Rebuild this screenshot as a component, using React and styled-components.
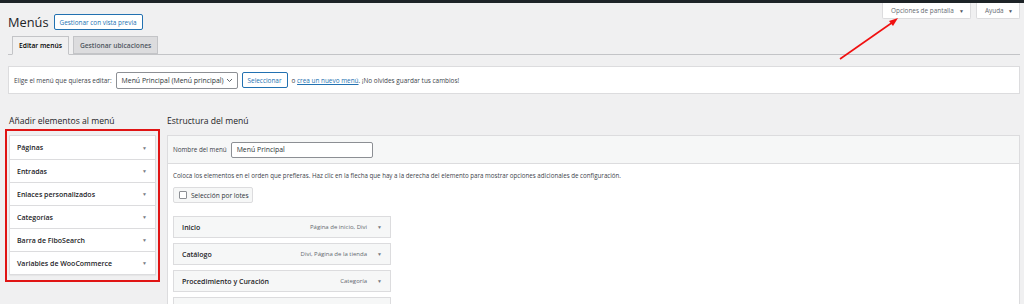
import React from "react";
import styled, { createGlobalStyle } from "styled-components";

const GlobalStyle = createGlobalStyle`
  html, body { margin: 0; padding: 0; }
  body {
    background: #f0f0f1;
    font-family: "Open Sans", "Noto Sans", sans-serif;
    color: #3c434a;
    width: 1024px;
    height: 304px;
    overflow: hidden;
    white-space: nowrap;
  }
`;

const Page = styled.div`
  position: relative;
  width: 1024px;
  height: 304px;
  overflow: hidden;
`;

const AdminBar = styled.div`
  height: 3px;
  background: #1d2327;
`;

const MetaRow = styled.div`
  display: flex;
  justify-content: flex-end;
  gap: 5px;
  padding-right: 4px;
  height: 0;
  overflow: visible;
`;

const MetaTab = styled.div`
  height: 16px;
  box-sizing: border-box;
  padding: 0 6px 0 8px;
  display: flex;
  align-items: center;
  justify-content: space-between;
  background: #fff;
  border: 1px solid #dcdcde;
  border-top: none;
  border-radius: 0 0 2px 2px;
  font-size: 6.4px;
  color: #646970;
  width: ${(p) => p.$w}px;
  flex-shrink: 0;
`;

const Caret = styled.span`
  font-size: 5px;
  color: ${(p) => p.$color || "#50575e"};
`;

const Wrap = styled.div`
  padding: 0 4px 0 8px;
`;

const TitleRow = styled.div`
  display: flex;
  align-items: center;
  gap: 5px;
  padding-top: 10px;
  height: 18px;
`;

const H1 = styled.h1`
  margin: 0;
  font-size: 12.8px;
  font-weight: 400;
  color: #1d2327;
`;

const OutlineButton = styled.button`
  height: 16px;
  box-sizing: border-box;
  padding: 0 5px;
  background: ${(p) => (p.$grey ? "#f6f7f7" : "#fff")};
  border: 1px solid ${(p) => (p.$grey ? "#dcdcde" : "#2271b1")};
  border-radius: 2px;
  color: ${(p) => (p.$grey ? "#2c3338" : "#2271b1")};
  font-family: inherit;
  font-size: 6.4px;
  display: inline-flex;
  align-items: center;
  gap: 4px;
  white-space: nowrap;
`;

const Tabs = styled.div`
  display: flex;
  gap: 4px;
  margin-top: 5px;
  padding-left: 4px;
  border-bottom: 1px solid #c3c4c7;
  height: 18px;
`;

const Tab = styled.div`
  box-sizing: border-box;
  padding: 0 6px;
  display: flex;
  align-items: center;
  font-size: 6.7px;
  font-weight: 600;
  border: 1px solid #c3c4c7;
  background: ${(p) => (p.$active ? "#f0f0f1" : "#dcdcde")};
  color: ${(p) => (p.$active ? "#000" : "#50575e")};
  border-bottom-color: ${(p) => (p.$active ? "#f0f0f1" : "#c3c4c7")};
  height: ${(p) => (p.$active ? "19px" : "18px")};
`;

const SelectBox = styled.div`
  margin-top: 11px;
  height: 28px;
  box-sizing: border-box;
  background: #fff;
  border: 1px solid #dcdcde;
  display: flex;
  align-items: center;
  padding-left: 5px;
  gap: 4px;
  font-size: 6.4px;
  color: #3c434a;
`;

const Select = styled.div`
  height: 17px;
  box-sizing: border-box;
  width: 122px;
  border: 1px solid #8c8f94;
  border-radius: 2px;
  padding: 0 4px 0 5px;
  display: flex;
  align-items: center;
  justify-content: space-between;
  font-size: 6.9px;
  color: #2c3338;
`;

const Link = styled.a`
  color: #2271b1;
  text-decoration: underline;
`;

const Columns = styled.div`
  display: grid;
  grid-template-columns: 148px 1fr;
  column-gap: 11px;
  margin-top: 21px;
`;

const H2 = styled.h2`
  margin: 0 0 7px;
  font-size: 8.6px;
  font-weight: 500;
  color: #1d2327;
  height: 13px;
  line-height: 13px;
`;

const LeftCol = styled.div`
  padding-left: 1px;
`;

const Accordion = styled.div`
  position: relative;
  background: #fff;
  border: 1px solid #dcdcde;
  box-shadow: 0 1px 1px rgba(0,0,0,0.04);
  width: 147px;
  box-sizing: border-box;
`;

const Annotation = styled.div`
  position: absolute;
  left: -5px;
  top: -7px;
  right: -5px;
  bottom: -8px;
  border: 2px solid #e01414;
  pointer-events: none;
`;

const AccRow = styled.div`
  height: 23px;
  box-sizing: border-box;
  display: flex;
  align-items: center;
  justify-content: space-between;
  padding: 0 8px 0 7px;
  font-size: 7px;
  font-weight: 600;
  color: #1d2327;
  & + & { border-top: 1px solid #dcdcde; }
`;

const Panel = styled.div`
  background: #fff;
  border: 1px solid #dcdcde;
  height: 200px;
`;

const PanelHeader = styled.div`
  height: 27px;
  background: #f6f7f7;
  border-bottom: 1px solid #dcdcde;
  display: flex;
  align-items: center;
  gap: 4px;
  padding-left: 5px;
  font-size: 6.3px;
  color: #3c434a;
`;

const TextInput = styled.div`
  width: 142px;
  height: 16px;
  box-sizing: border-box;
  border: 1px solid #8c8f94;
  border-radius: 2px;
  background: #fff;
  display: flex;
  align-items: center;
  padding-left: 5px;
  font-size: 6.9px;
  color: #2c3338;
`;

const PanelBody = styled.div`
  padding: 7px 5px;
  font-size: 6.2px;
  color: #3c434a;
`;

const Note = styled.p`
  margin: 0;
  line-height: 10px;
`;

const CheckButton = styled(OutlineButton)`
  margin-top: 6px;
  width: 80px;
  padding: 0 5px;
  font-size: 6.6px;
`;

const Box = styled.span`
  display: inline-block;
  flex-shrink: 0;
  width: 8px;
  height: 8px;
  box-sizing: border-box;
  border: 1px solid #8c8f94;
  border-radius: 1px;
  background: #fff;
`;

const MenuList = styled.div`
  margin-top: 13px;
  display: flex;
  flex-direction: column;
  gap: 5px;
`;

const MenuItem = styled.div`
  width: 218px;
  height: 22px;
  box-sizing: border-box;
  background: #f6f7f7;
  border: 1px solid #dcdcde;
  display: flex;
  align-items: center;
  padding: 0 8px;
  font-size: 7px;
  font-weight: 600;
  color: #1d2327;
`;

const ItemTitle = styled.span`
  flex: 1;
`;

const ItemMeta = styled.span`
  font-size: 6px;
  font-weight: 400;
  color: #646970;
  margin-right: 10px;
`;

const ArrowSvg = styled.svg`
  position: absolute;
  left: 0;
  top: 0;
  pointer-events: none;
`;

const accItems = [
  "Páginas",
  "Entradas",
  "Enlaces personalizados",
  "Categorías",
  "Barra de FiboSearch",
  "Variables de WooCommerce",
];

const menuItems = [
  { title: "Inicio", meta: "Página de inicio, Divi" },
  { title: "Catálogo", meta: "Divi, Página de la tienda" },
  { title: "Procedimiento y Curación", meta: "Categoría" },
  { title: "", meta: "" },
];

export default function App() {
  return (
    <Page>
      <GlobalStyle />
      <AdminBar />
      <MetaRow>
        <MetaTab $w={89}>
          <span>Opciones de pantalla</span> <Caret>▼</Caret>
        </MetaTab>
        <MetaTab $w={44}>
          <span>Ayuda</span> <Caret>▼</Caret>
        </MetaTab>
      </MetaRow>
      <Wrap>
        <TitleRow>
          <H1>Menús</H1>
          <OutlineButton>Gestionar con vista previa</OutlineButton>
        </TitleRow>
        <Tabs>
          <Tab $active>Editar menús</Tab>
          <Tab>Gestionar ubicaciones</Tab>
        </Tabs>
        <SelectBox>
          <span>Elige el menú que quieras editar:</span>
          <Select>
            <span>Menú Principal (Menú principal)</span>
            <svg width="7" height="5" viewBox="0 0 7 5">
              <path d="M1 1 L3.5 3.5 L6 1" fill="none" stroke="#50575e" strokeWidth="0.9" />
            </svg>
          </Select>
          <OutlineButton>Seleccionar</OutlineButton>
          <span>
            o <Link>crea un nuevo menú</Link>. ¡No olvides guardar tus cambios!
          </span>
        </SelectBox>
        <Columns>
          <LeftCol>
            <H2>Añadir elementos al menú</H2>
            <Accordion>
              {accItems.map((t) => (
                <AccRow key={t}>
                  <span>{t}</span>
                  <Caret $color="#787c82">▼</Caret>
                </AccRow>
              ))}
              <Annotation />
            </Accordion>
          </LeftCol>
          <div>
            <H2>Estructura del menú</H2>
            <Panel>
              <PanelHeader>
                <span>Nombre del menú</span>
                <TextInput>Menú Principal</TextInput>
              </PanelHeader>
              <PanelBody>
                <Note>
                  Coloca los elementos en el orden que prefieras. Haz clic en la flecha que hay a la derecha del elemento para mostrar opciones adicionales de configuración.
                </Note>
                <CheckButton $grey>
                  <Box /> Selección por lotes
                </CheckButton>
                <MenuList>
                  {menuItems.map((m, i) => (
                    <MenuItem key={i}>
                      <ItemTitle>{m.title}</ItemTitle>
                      {m.meta && <ItemMeta>{m.meta}</ItemMeta>}
                      {m.meta && <Caret $color="#787c82">▼</Caret>}
                    </MenuItem>
                  ))}
                </MenuList>
              </PanelBody>
            </Panel>
          </div>
        </Columns>
      </Wrap>
      <ArrowSvg width="1024" height="304" viewBox="0 0 1024 304">
        <line x1="840" y1="59" x2="893" y2="22" stroke="#f01010" strokeWidth="1.6" />
        <polygon points="898,18 889,21 893,26" fill="#f01010" />
      </ArrowSvg>
    </Page>
  );
}
